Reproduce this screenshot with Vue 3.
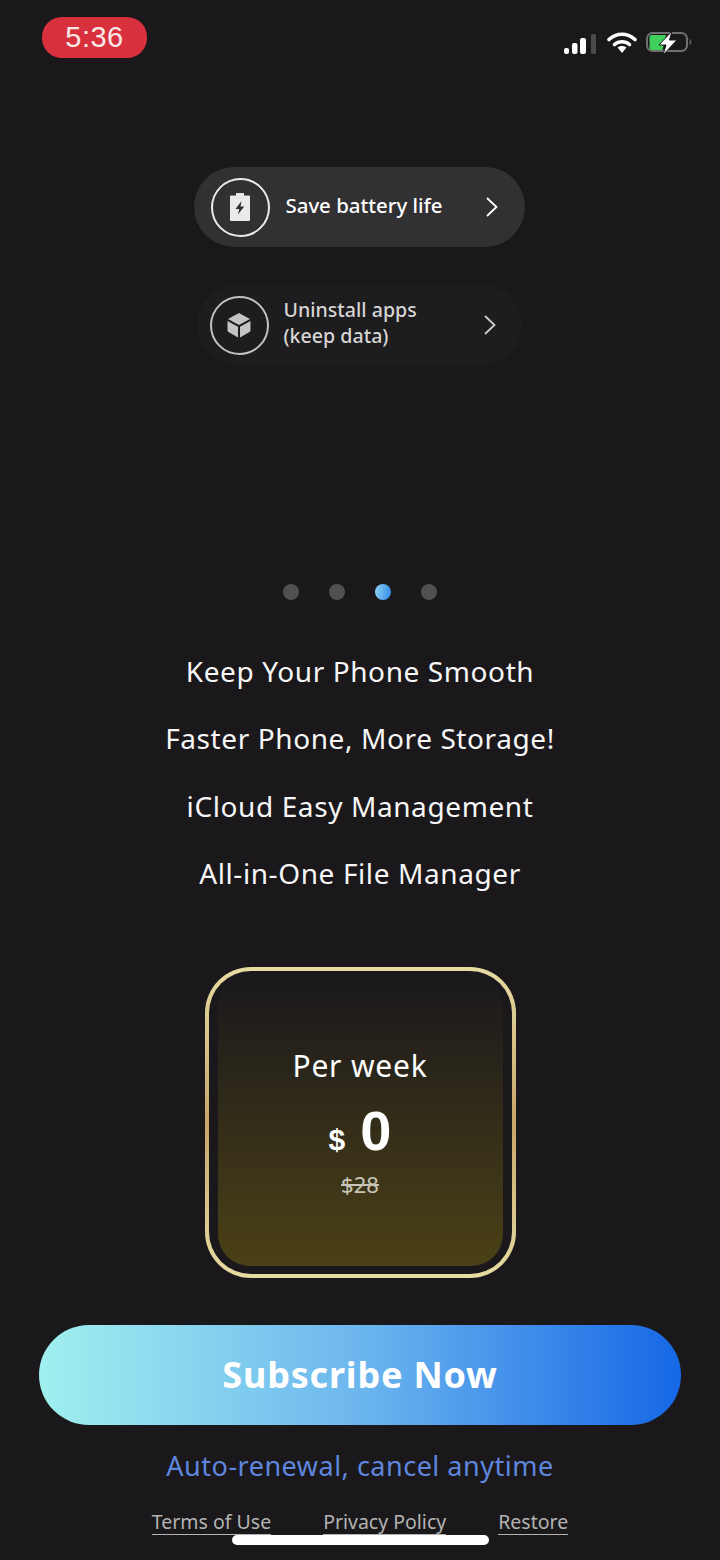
<template>
  <div class="screen">
    <div class="status-bar">
      <div class="clock">5:36</div>
      <div class="status-icons">
        <svg width="34" height="24" viewBox="0 0 34 24">
          <rect x="0" y="17" width="5" height="6" rx="2" fill="#fff" />
          <rect x="8" y="12" width="5.500" height="11" rx="2" fill="#fff" />
          <rect x="16" y="7" width="6" height="16" rx="2" fill="#fff" />
          <rect x="27" y="3" width="5" height="20" rx="1.500" fill="#4b4b4d" />
        </svg>
        <svg width="30" height="24" viewBox="0 0 30 24">
          <path d="M2 8.500C9.500 1.500 20.500 1.500 28 8.500" fill="none" stroke="#fff" stroke-width="3.600" stroke-linecap="round" />
          <path d="M7.500 13.500C11.800 9.800 18.200 9.800 22.500 13.500" fill="none" stroke="#fff" stroke-width="3.600" stroke-linecap="round" />
          <path d="M10.500 16.500C13.200 14.500 16.800 14.500 19.500 16.500L15 22Z" fill="#fff" />
        </svg>
        <svg width="48" height="28" viewBox="0 0 48 28">
          <rect x="1" y="6" width="40" height="18" rx="5.500" fill="none" stroke="#6f6f70" stroke-width="2" />
          <path d="M3.500 10a2 2 0 0 1 2-2H20l-3.500 15H5.500a2 2 0 0 1-2-2z" fill="#3fcf5a" />
          <path d="M43.500 12c1.500.4 2 1.200 2 3s-.5 2.600-2 3z" fill="#5a5a5b" />
          <path d="M26 4 13 18h7l-3 10L31 13h-7.500z" fill="#fff" stroke="#1a181b" stroke-width="1" />
        </svg>
      </div>
    </div>

    <div class="feature-pills">
      <div class="pill pill-active">
        <span class="pill-icon">
          <svg width="22" height="28" viewBox="0 0 22 28">
            <path d="M7 0h8v2.500h5a1 1 0 0 1 1 1V27a1 1 0 0 1-1 1H2a1 1 0 0 1-1-1V3.500a1 1 0 0 1 1-1h5z" fill="#fff" />
            <path d="M12.500 8 6.500 16h3.700l-1.200 5.500 6.200-8h-3.700z" fill="#2f2d30" />
          </svg>
        </span>
        <span class="pill-text">Save battery life</span>
        <svg class="chevron" width="14" height="22" viewBox="0 0 14 22">
          <path d="M2 2l9.500 9L2 20" fill="none" stroke="#fff" stroke-width="1.800" />
        </svg>
      </div>
      <div class="pill pill-dim">
        <span class="pill-icon">
          <svg width="26" height="26" viewBox="0 0 26 26">
            <path d="M13 1 24 7l-11 6L2 7z" fill="#d8d7d6" />
            <path d="M1.500 9 12 14.800V25.500L2.500 20a2 2 0 0 1-1-1.700z" fill="#d8d7d6" />
            <path d="M24.500 9 14 14.800V25.500L23.500 20a2 2 0 0 0 1-1.700z" fill="#d8d7d6" />
          </svg>
        </span>
        <span class="pill-text">Uninstall apps<br />(keep data)</span>
        <svg class="chevron" width="14" height="22" viewBox="0 0 14 22">
          <path d="M2 2l9.500 9L2 20" fill="none" stroke="#cfcecd" stroke-width="1.800" />
        </svg>
      </div>
    </div>

    <div class="dots">
      <span v-for="n in 4" :key="n" class="dot" :class="{ 'dot-on': n === 3 }"></span>
    </div>

    <ul class="benefits">
      <li v-for="line in benefits" :key="line">{{ line }}</li>
    </ul>

    <div class="plan">
      <div class="plan-inner">
        <div class="plan-fill">
          <div class="plan-name">Per week</div>
          <div class="plan-price"><span class="currency">$</span><span class="amount">0</span></div>
          <div class="plan-old">$28</div>
        </div>
      </div>
    </div>

    <button type="button" class="subscribe">Subscribe Now</button>
    <div class="renewal">Auto-renewal, cancel anytime</div>

    <div class="links">
      <a>Terms of Use</a>
      <a>Privacy Policy</a>
      <a>Restore</a>
    </div>
    <div class="home-bar"></div>
  </div>
</template>

<script setup>
const benefits = [
  "Keep Your Phone Smooth",
  "Faster Phone, More Storage!",
  "iCloud Easy Management",
  "All-in-One File Manager",
];
</script>

<style>
html,
body {
  margin: 0;
  background: #1a181b;
}
</style>

<style scoped>
.screen {
  position: relative;
  width: 720px;
  height: 1560px;
  overflow: hidden;
  background: #1a181b;
  color: #fff;
  font-family: "Noto Sans", "Open Sans", sans-serif;
}

.status-bar {
  display: flex;
  justify-content: space-between;
  padding: 17px 26px 0 42px;
  height: 167px;
  box-sizing: border-box;
}

.clock {
  width: 105px;
  height: 41px;
  border-radius: 20px;
  background: #d8303c;
  color: #f8e9e9;
  font-family: "Liberation Sans", sans-serif;
  font-size: 29px;
  letter-spacing: 0.5px;
  line-height: 41px;
  text-align: center;
}

.status-icons {
  display: flex;
  align-items: flex-end;
  gap: 9px;
  height: 38px;
}

.feature-pills {
  display: flex;
  flex-direction: column;
  align-items: center;
  gap: 38px;
  padding-right: 2px;
}

.pill {
  display: flex;
  align-items: center;
  box-sizing: border-box;
  height: 80px;
  border-radius: 40px;
}

.pill-active {
  width: 331px;
  padding: 0 26px 0 17px;
  background: #313033;
}

.pill-dim {
  width: 325px;
  padding: 0 25px 0 13px;
  background: #1d1c1f;
  color: #d6d5d4;
}

.pill-icon {
  display: flex;
  align-items: center;
  justify-content: center;
  box-sizing: border-box;
  width: 59px;
  height: 59px;
  border: 2px solid currentColor;
  border-radius: 50%;
  flex-shrink: 0;
  opacity: 0.9;
}

.pill-text {
  flex: 1;
  margin-left: 15px;
  font-size: 20px;
  font-weight: 500;
  line-height: 26px;
}

.pill-active .pill-text {
  font-size: 20.400px;
  padding-bottom: 4px;
  margin-left: 16px;
}

.pill-dim .pill-text {
  font-size: 19.600px;
  padding-bottom: 4px;
}

.chevron {
  flex-shrink: 0;
}

.dots {
  display: flex;
  justify-content: center;
  gap: 30px;
  margin-top: 219px;
}

.dot {
  width: 16px;
  height: 16px;
  border-radius: 50%;
  background: #505052;
}

.dot-on {
  background: linear-gradient(100deg, #8fd4f4, #2f88e6);
}

.benefits {
  list-style: none;
  margin: 38px 0 0;
  padding: 0;
  text-align: center;
  font-size: 28px;
  line-height: 67.400px;
  letter-spacing: 0.6px;
  color: #f7f6f6;
}

.plan {
  box-sizing: border-box;
  width: 311px;
  height: 311px;
  margin: 59px auto 0;
  padding: 4px;
  border-radius: 46px;
  background: linear-gradient(180deg, #e6dca2 0%, #c8a56a 50%, #e6dca2 100%);
}

.plan-inner {
  box-sizing: border-box;
  height: 100%;
  padding: 4px 9px 8px;
  border-radius: 42px;
  background: #1a181b;
}

.plan-fill {
  display: flex;
  flex-direction: column;
  align-items: center;
  height: 100%;
  padding-top: 70px;
  box-sizing: border-box;
  border-radius: 32px;
  background: linear-gradient(180deg, #1a181b 0%, #211e1b 15%, #4b4116 100%);
}

.plan-name {
  font-size: 30px;
  letter-spacing: 0.8px;
  line-height: 42px;
}

.plan-price {
  display: flex;
  align-items: baseline;
  gap: 15px;
  margin-top: 15px;
  font-family: "Liberation Sans", sans-serif;
  font-weight: 700;
  height: 58px;
  line-height: 58px;
}

.currency {
  font-size: 30px;
}

.amount {
  font-size: 56px;
}

.plan-old {
  font-size: 22px;
  line-height: 30px;
  margin-top: 9px;
  color: #c9c6b8;
  text-decoration: line-through;
}

.subscribe {
  display: block;
  width: 642px;
  height: 100px;
  margin: 47px auto 0;
  border: 0;
  border-radius: 50px;
  background: linear-gradient(90deg, #a0f0ef 0%, #6cb6ee 50%, #1667e6 100%);
  color: #fff;
  font-family: inherit;
  font-size: 36px;
  font-weight: 700;
  letter-spacing: 0.800px;
}

.renewal {
  margin-top: 20px;
  text-align: center;
  font-size: 27px;
  line-height: 42px;
  letter-spacing: 0.5px;
  color: #5f86de;
}

.links {
  display: flex;
  justify-content: center;
  gap: 52px;
  margin-top: 23px;
  font-size: 19.500px;
  line-height: 24px;
  color: #b4b3b3;
}

.links a {
  border-bottom: 1px solid #b4b3b3;
}

.home-bar {
  position: absolute;
  left: 232px;
  top: 1535px;
  width: 257px;
  height: 10px;
  border-radius: 5px;
  background: #fff;
}
</style>
